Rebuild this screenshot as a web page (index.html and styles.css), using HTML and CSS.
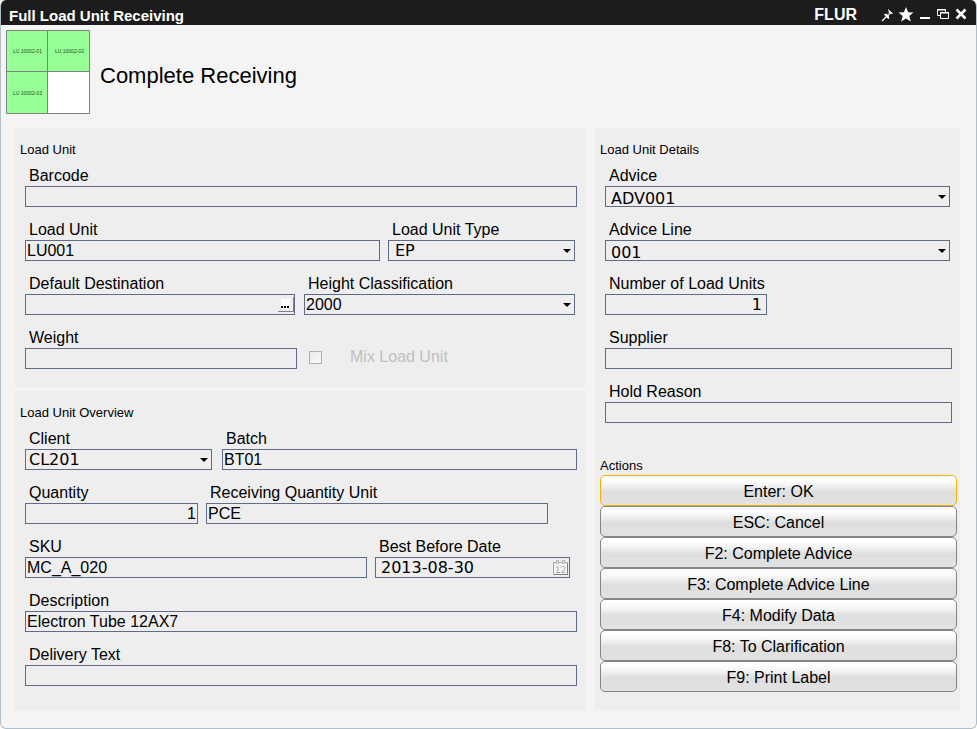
FILE: index.html
```html
<!DOCTYPE html>
<html lang="en">
<head>
<meta charset="utf-8">
<title>Full Load Unit Receiving</title>
<link rel="stylesheet" href="styles.css">
</head>
<body>
<div class="window">
  <header class="titlebar">
    <h1 class="titlebar-title">Full Load Unit Receiving</h1>
    <span class="titlebar-code">FLUR</span>
    <div class="titlebar-tools">
      <button type="button" class="tool" aria-label="Pin"><svg width="12" height="16" viewBox="0 0 12 16"><path d="M7 2l5 4.500-1.500.5-1-.2-1.700 1.800.4 2.900-1 .5L3 7.500l.8-.8 2.700.3 1.500-1.700-.6-1.300z" fill="#fff"/><path d="M5.500 9.500L1 14" stroke="#fff" stroke-width="1.300"/><path d="M6.500 8l2-2.200" stroke="#333"/></svg></button>
      <button type="button" class="tool" aria-label="Favourite"><svg width="16" height="16" viewBox="0 0 16 16"><path d="M8 0l2.100 5.200 5.400.3-4.200 3.500 1.500 5.400L8 11.500l-4.800 2.900L4.700 9 .5 5.500l5.400-.3z" fill="#fff"/></svg></button>
      <button type="button" class="tool" aria-label="Minimize"><svg width="12" height="16" viewBox="0 0 12 16"><path d="M1 10h10v2H1z" fill="#fff"/></svg></button>
      <button type="button" class="tool" aria-label="Restore"><svg width="14" height="16" viewBox="0 0 14 16"><path d="M4 8.500H1.500v-6h8V5M1 3h9" fill="none" stroke="#fff"/><path d="M4.500 5.500h8v6h-8zM4 6h9" fill="none" stroke="#fff"/></svg></button>
      <button type="button" class="tool" aria-label="Close"><svg width="12" height="16" viewBox="0 0 12 16"><path d="M1.500 2.500l9 9M10.500 2.500l-9 9" stroke="#fff" stroke-width="2.500"/></svg></button>
    </div>
  </header>

  <div class="heading">
    <svg class="heading-icon" width="85" height="85" viewBox="0 0 85 85">
      <path d="M1 1h83v83H1z" fill="#fff"/>
      <path d="M1 1h83v41H43v42H1z" fill="#96ff96"/>
      <path d="M1.500 1.500h83v83h-83zM42.500 1.500v83M1.500 42.500h83" fill="none" stroke="#808080"/>
      <text x="8" y="24" class="unit-text">LU 10002-01</text>
      <text x="50" y="24" class="unit-text">LU 10002-02</text>
      <text x="8" y="66" class="unit-text">LU 10002-03</text>
    </svg>
    <h2 class="heading-title">Complete Receiving</h2>
  </div>

  <form class="content">
    <div class="column">
      <section class="panel">
        <h3 class="panel-title">Load Unit</h3>
        <div class="fields">
          <div class="field"><label for="barcode">Barcode</label><input id="barcode" type="text"></div>
          <div class="row row-unit">
            <div class="field"><label for="unit">Load Unit</label><input id="unit" type="text" value="LU001"></div>
            <div class="field"><label for="type">Load Unit Type</label><div class="select wide-inset"><select id="type"><option>EP</option></select></div></div>
          </div>
          <div class="row row-destination">
            <div class="field"><label for="destination">Default Destination</label>
              <div class="box"><input id="destination" type="text"><button type="button" class="browse" aria-label="Browse"><svg width="9" height="10" viewBox="0 0 9 10"><path d="M0 0h9v10H0z" fill="#fff"/><path d="M0 7h2v2H0zM3 7h2v2H3zM6 7h2v2H6z" fill="#000"/></svg></button></div>
            </div>
            <div class="field"><label for="height">Height Classification</label><div class="select plain"><select id="height"><option>2000</option></select></div></div>
          </div>
          <div class="row row-weight">
            <div class="field"><label for="weight">Weight</label><input id="weight" type="text"></div>
            <div class="check"><input id="mix" type="checkbox" disabled><label for="mix">Mix Load Unit</label></div>
          </div>
        </div>
      </section>

      <section class="panel panel-fill">
        <h3 class="panel-title">Load Unit Overview</h3>
        <div class="fields">
          <div class="row row-client">
            <div class="field"><label for="client">Client</label><div class="select"><select id="client"><option>CL201</option></select></div></div>
            <div class="field"><label for="batch">Batch</label><input id="batch" type="text" value="BT01"></div>
          </div>
          <div class="row row-quantity">
            <div class="field"><label for="quantity">Quantity</label><input id="quantity" class="number" type="text" value="1"></div>
            <div class="field"><label for="qunit">Receiving Quantity Unit</label><input id="qunit" type="text" value="PCE"></div>
          </div>
          <div class="row row-sku">
            <div class="field"><label for="sku">SKU</label><input id="sku" type="text" value="MC_A_020"></div>
            <div class="field"><label for="best">Best Before Date</label>
              <div class="box date"><input id="best" type="text" value="2013-08-30"><button type="button" class="calendar" aria-label="Choose date"><svg width="17" height="17" viewBox="0 0 17 17"><path d="M1.500 3.500h14v12h-14z" fill="#f4f4f4" stroke="#a8a8a8"/><path d="M15.500 4v12M2 15.500h14" stroke="#808080"/><path d="M4.500 1.500h2v3h-2zM10.500 1.500h2v3h-2zM7 3.500h3" fill="#eee" stroke="#b4b4b4"/><path d="M4.500 8.500l1.500-1v6M4 13.500h4M9.500 8.500l1-1h1.500l1 1v1l-3.500 4H13" fill="none" stroke="#a8a8a8"/></svg></button></div>
            </div>
          </div>
          <div class="field"><label for="description">Description</label><input id="description" type="text" value="Electron Tube 12AX7"></div>
          <div class="field"><label for="delivery">Delivery Text</label><input id="delivery" type="text"></div>
        </div>
      </section>
    </div>

    <section class="panel">
      <h3 class="panel-title">Load Unit Details</h3>
      <div class="fields">
        <div class="field field-short"><label for="advice">Advice</label><div class="select detail"><select id="advice"><option>ADV001</option></select></div></div>
        <div class="field field-short"><label for="line">Advice Line</label><div class="select detail"><select id="line"><option>001</option></select></div></div>
        <div class="row row-number">
          <div class="field"><label for="number">Number of Load Units</label><input id="number" class="number count" type="text" value="1"></div>
        </div>
        <div class="field"><label for="supplier">Supplier</label><input id="supplier" type="text"></div>
        <div class="field"><label for="hold">Hold Reason</label><input id="hold" type="text"></div>
      </div>
      <h3 class="panel-title actions-title">Actions</h3>
      <div class="actions">
        <button type="button" class="action action-default">Enter: OK</button>
        <button type="button" class="action">ESC: Cancel</button>
        <button type="button" class="action">F2: Complete Advice</button>
        <button type="button" class="action">F3: Complete Advice Line</button>
        <button type="button" class="action">F4: Modify Data</button>
        <button type="button" class="action">F8: To Clarification</button>
        <button type="button" class="action">F9: Print Label</button>
      </div>
    </section>
  </form>
</div>
</body>
</html>
```
FILE: styles.css
```css
* { box-sizing: border-box; }

body {
  margin: 0;
  background: #fff;
  color: #000;
  font-family: "Liberation Sans", Arial, sans-serif;
  font-size: 16px;
}

h1, h2, h3 { margin: 0; font-weight: normal; }

button, input, select { font: inherit; color: inherit; margin: 0; border-radius: 0; }

.window {
  min-height: 100vh;
  border: 1px solid #b0bfc9;
  border-top: 0;
  border-radius: 6px;
  background: #f4f4f4;
  overflow: hidden;
}

/* Title bar */
.titlebar {
  display: flex;
  align-items: center;
  height: 25px;
  margin: 0 -1px;
  padding: 5px 10px 0 9px;
  background: #1c1c1c;
  color: #fff;
}
.titlebar-title { flex: 1; font-size: 15px; font-weight: bold; }
.titlebar-code { font-weight: bold; }
.titlebar-tools { display: flex; gap: 5px; margin-left: 24px; }
.tool { display: flex; padding: 0; border: 0; background: none; }

/* Heading */
.heading { display: flex; align-items: center; gap: 10px; padding: 4px 4px 14px; }
.heading-icon { flex: none; }
.heading-title { font-size: 22px; line-height: 24px; padding-top: 8px; }
.unit-text { font-size: 5px; fill: #1e4a1e; }

/* Panels */
.content {
  display: grid;
  grid-template-columns: 570fr 365fr;
  gap: 10px;
  padding: 0 16px 18px 14px;
}
.column { display: flex; flex-direction: column; gap: 4px; }
.panel { padding: 14px 3px 18px 5px; background: #eee; }
.panel-fill { flex: 1; }
.panel-title { font-size: 13px; line-height: 16px; margin-bottom: 8px; }
.fields { display: flex; flex-direction: column; gap: 13px; padding: 0 5px; }

/* Fields */
.field { display: flex; flex-direction: column; min-width: 0; }
.field label { line-height: 20px; padding-left: 4px; white-space: nowrap; }
.field-short { margin-right: 2px; }

input[type="text"], select {
  display: block;
  width: 100%;
  height: 21px;
  padding: 0 1px;
  border: 1px solid #5f6b88;
  background: #eee;
  outline: 0;
}
input.number { text-align: right; }
input.count { padding-right: 4px; font-family: "DejaVu Sans", Verdana, sans-serif; }

.select { position: relative; }
.select select { appearance: none; padding: 0 20px 0 3px; font-family: "DejaVu Sans", Verdana, sans-serif; }
.select::after {
  content: "";
  position: absolute;
  right: 4px;
  top: 9px;
  border: 4px solid transparent;
  border-top-color: #000;
  border-bottom: 0;
}
.select.plain select { padding-left: 1px; font-family: inherit; }
.select.wide-inset select { padding-left: 6px; }
.select.detail select { padding-top: 2px; padding-left: 5px; }

.box { position: relative; }
.browse {
  position: absolute;
  right: 1px;
  top: 3px;
  display: flex;
  justify-content: center;
  align-items: center;
  width: 16px;
  height: 15px;
  padding: 0;
  border: solid #808080;
  border-width: 0 1px 1px 0;
  background: #eee;
}
.date input { padding-left: 5px; font-family: "DejaVu Sans", Verdana, sans-serif; }
.calendar { position: absolute; right: 1px; top: 2px; display: flex; padding: 0; border: 0; background: none; }

/* Rows of side-by-side fields */
.row { display: grid; gap: 8px; }
.row-unit { grid-template-columns: 355fr 187fr; padding-right: 2px; }
.row-destination { grid-template-columns: 270fr 271fr; gap: 9px; padding-right: 2px; }
.row-weight { grid-template-columns: 272fr 272fr; }
.row-client { grid-template-columns: 187fr 355fr; gap: 10px; }
.row-quantity { grid-template-columns: 173fr 342fr 21fr; }
.row-sku { grid-template-columns: 342fr 195fr; padding-right: 7px; }
.row-number { grid-template-columns: 162fr 177fr; }

.check { display: flex; align-items: center; gap: 28px; padding: 17px 0 0 4px; color: #c0c0c0; }
.check input {
  appearance: none;
  width: 13px;
  height: 13px;
  border: 1px solid #b0b0b0;
  background: linear-gradient(135deg, #eaeaea, #fafafa);
}

/* Actions */
.actions-title { margin: 35px 0 1px; }
.actions { display: flex; flex-direction: column; }
.action {
  height: 31px;
  padding: 2px 0 0;
  border: 1px solid #858585;
  border-radius: 5px;
  background: linear-gradient(#fff 10%, #f4f4f4 30%, #dedede 55%, #e2e2e2);
}
.action-default { border-color: #f2b200; }
```
